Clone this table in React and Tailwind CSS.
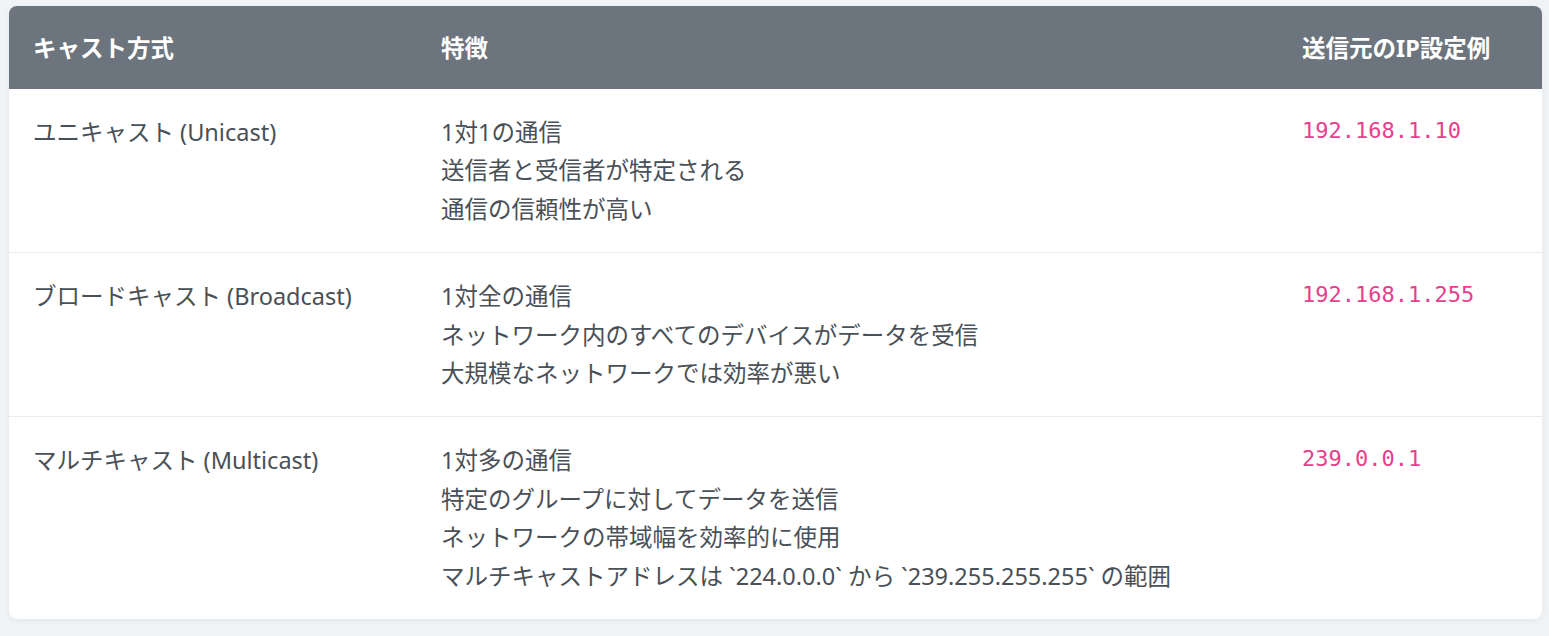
import React from "react";

const ROWS = [
  {
    name: "ユニキャスト (Unicast)",
    lines: ["1対1の通信", "送信者と受信者が特定される", "通信の信頼性が高い"],
    ip: "192.168.1.10",
  },
  {
    name: "ブロードキャスト (Broadcast)",
    lines: [
      "1対全の通信",
      "ネットワーク内のすべてのデバイスがデータを受信",
      "大規模なネットワークでは効率が悪い",
    ],
    ip: "192.168.1.255",
  },
  {
    name: "マルチキャスト (Multicast)",
    lines: [
      "1対多の通信",
      "特定のグループに対してデータを送信",
      "ネットワークの帯域幅を効率的に使用",
      "マルチキャストアドレスは `224.0.0.0` から `239.255.255.255` の範囲",
    ],
    ip: "239.0.0.1",
  },
];

export default function App() {
  return (
    <div
      className="min-h-[636px] bg-[#f1f4f7] pl-[9px] pt-[6px]"
      style={{ fontFamily: '"Noto Sans", "Noto Sans CJK JP", sans-serif' }}
    >
      <div className="w-[1533px] overflow-hidden rounded-[8px] bg-white shadow-[0_2px_6px_rgba(0,0,0,0.06)]">
        <table className="w-full border-collapse text-left text-[23.5px] text-[#495057]">
          <thead>
            <tr className="bg-[#6c757d] text-white">
              <th className="w-[408px] px-6 pt-[25px] pb-[23px] font-bold leading-[35px]">キャスト方式</th>
              <th className="w-[861px] px-6 pt-[25px] pb-[23px] font-bold leading-[35px]">特徴</th>
              <th className="px-6 pt-[25px] pb-[23px] font-bold leading-[35px]">送信元のIP設定例</th>
            </tr>
          </thead>
          <tbody>
            {ROWS.map((r, i) => (
              <tr key={i} className={i > 0 ? "border-t border-[#e9ecef]" : ""}>
                <td className="px-6 py-6 align-top leading-[38.4px]">{r.name}</td>
                <td className="px-6 py-6 align-top leading-[38.4px]">
                  {r.lines.map((l, j) => (
                    <div key={j}>{l}</div>
                  ))}
                </td>
                <td className="px-6 py-6 align-top leading-[38.4px]">
                  <code
                    className="relative -top-[3px] text-[22px] text-[#e83e8c]"
                    style={{ fontFamily: '"DejaVu Sans Mono", monospace' }}
                  >
                    {r.ip}
                  </code>
                </td>
              </tr>
            ))}
          </tbody>
        </table>
      </div>
    </div>
  );
}
